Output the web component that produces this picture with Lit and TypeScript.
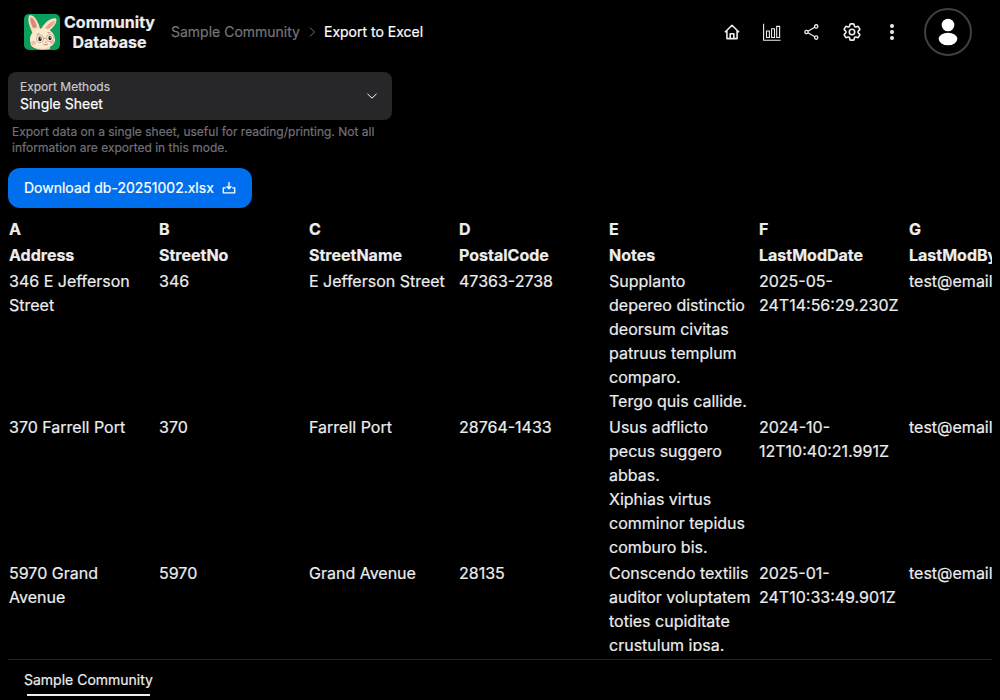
import { LitElement, html, css, svg } from "lit";
import { customElement } from "lit/decorators.js";

const columns = ["A", "B", "C", "D", "E", "F", "G"];
const headings = ["Address", "StreetNo", "StreetName", "PostalCode", "Notes", "LastModDate", "LastModBy"];
const rows = [
  ["346 E Jefferson Street", "346", "E Jefferson Street", "47363-2738",
    "Supplanto depereo distinctio deorsum civitas patruus templum comparo.\nTergo quis callide.",
    "2025-05-24T14:56:29.230Z", "test@email"],
  ["370 Farrell Port", "370", "Farrell Port", "28764-1433",
    "Usus adflicto pecus suggero abbas.\nXiphias virtus comminor tepidus comburo bis.",
    "2024-10-12T10:40:21.991Z", "test@email"],
  ["5970 Grand Avenue", "5970", "Grand Avenue", "28135",
    "Conscendo textilis auditor voluptatem toties cupiditate crustulum ipsa.",
    "2025-01-24T10:33:49.901Z", "test@email"],
];

const logo = svg`<svg class="logo" viewBox="0 0 36 36">
  <rect width="36" height="36" rx="5" fill="#0c9f5b"/>
  <path d="M8.500 19C5 12 3 4.500 5.500 1.300C10 0 15 8 16.500 17Z" fill="#f8dfc0"/>
  <path d="M9 14C6.500 9 5.500 5 6.800 3.300C9.500 3.500 12 8.500 13 13.500Z" fill="#d98a78"/>
  <path d="M16.500 17C18.500 10.500 25 4 32 4.300C34 8 29 15.500 21.500 18.500Z" fill="#f8dfc0"/>
  <path d="M21 14.500C23.500 10.500 27.500 7.300 30.800 7C31 9.500 27 13.500 22.500 16Z" fill="#e8a48e"/>
  <path d="M6.500 31L7 27.500L26 31L26 35C20 36.500 11 36.500 6.500 31Z" fill="#f2d5b5"/>
  <path d="M17 14.500C24.500 13.500 30.500 18.500 31 25.500C31.300 31 25 34.500 18 34.800C10 35 5.500 30.500 6 25C6.500 19 10.500 15.300 17 14.500Z" fill="#fce8cd"/>
  <circle cx="9.500" cy="29" r="2.300" fill="#f3bfa2"/>
  <circle cx="28" cy="28" r="2" fill="#efb195"/>
  <ellipse cx="16" cy="24.800" rx="3.500" ry="3.900" fill="#fff6e8" stroke="#a58470" stroke-width=".6"/>
  <ellipse cx="26" cy="23.900" rx="3.400" ry="3.700" fill="#fff6e8" stroke="#a58470" stroke-width=".6"/>
  <ellipse cx="16" cy="24.900" rx="1.700" ry="2.400" fill="#342621"/>
  <ellipse cx="26" cy="24" rx="1.600" ry="2.300" fill="#342621"/>
  <circle cx="16.500" cy="24" r=".6" fill="#fff"/><circle cx="26.400" cy="23.200" r=".6" fill="#fff"/>
  <path d="M12.500 20.700l3-1.500M23.500 18.500l3 .3M19.500 24.500l3-.3" stroke="#a87b66" stroke-width=".7" fill="none"/>
  <path d="M20.700 27.800h2.200l-1 1.200Z" fill="#c9675c"/>
  <path d="M19.500 30.300q2.500 1.500 4.500-.3" fill="none" stroke="#98594d" stroke-width=".7"/>
</svg>`;

const homeIcon = svg`<svg class="icon" viewBox="0 0 18 18">
  <path d="M1.900 9.200L9 2.300l7.100 6.900M3.900 7.600v8h10.200v-8M7.200 15.400v-4.700h3.600v4.700"/>
</svg>`;
const chartIcon = svg`<svg class="icon chart" viewBox="0 0 18 18">
  <path d="M.6.700v16.600h17M3.500 8h2.900v6.500H3.500zM8.600 5.800h2.900v8.700H8.600zM13.700 3.400h2.900v11.100h-2.900z"/>
</svg>`;
const shareIcon = svg`<svg class="icon share" viewBox="0 0 18 18">
  <path d="M4.900 8.200l6.900-3.900M4.900 9.800l6.900 3.900"/>
  <circle cx="3.500" cy="9" r="1.650"/><circle cx="13.200" cy="3.400" r="1.650"/><circle cx="13.200" cy="14.600" r="1.650"/>
</svg>`;
const gearIcon = svg`<svg class="icon gear" viewBox="2 2 20 20">
  <path d="M9.594 3.940c.09-.542.56-.94 1.110-.94h2.593c.55 0 1.020.398 1.110.94l.213 1.281c.063.374.313.686.645.87.074.04.147.083.22.127.325.196.72.257 1.075.124l1.217-.456a1.125 1.125 0 0 1 1.370.49l1.296 2.247a1.125 1.125 0 0 1-.26 1.431l-1.003.827c-.293.241-.438.613-.43.992a7.723 7.723 0 0 1 0 .255c-.008.378.137.75.43.991l1.004.827c.424.35.534.955.26 1.430l-1.298 2.247a1.125 1.125 0 0 1-1.369.491l-1.217-.456c-.355-.133-.75-.072-1.076.124a6.470 6.470 0 0 1-.22.128c-.331.183-.581.495-.644.869l-.213 1.281c-.09.543-.56.94-1.110.94h-2.594c-.55 0-1.019-.398-1.110-.94l-.213-1.281c-.062-.374-.312-.686-.644-.87a6.520 6.520 0 0 1-.22-.127c-.325-.196-.72-.257-1.076-.124l-1.217.456a1.125 1.125 0 0 1-1.369-.49l-1.297-2.247a1.125 1.125 0 0 1 .26-1.431l1.004-.827c.292-.24.437-.613.43-.991a6.932 6.932 0 0 1 0-.255c.007-.38-.138-.751-.43-.992l-1.004-.827a1.125 1.125 0 0 1-.26-1.430l1.297-2.247a1.125 1.125 0 0 1 1.370-.491l1.216.456c.356.133.751.072 1.076-.124.072-.044.146-.086.22-.128.332-.183.582-.495.644-.869l.214-1.280Z"/>
  <circle cx="12" cy="12" r="3"/>
</svg>`;
const moreIcon = svg`<svg class="icon solid" viewBox="0 0 18 18">
  <circle cx="9" cy="3" r="2"/><circle cx="9" cy="9" r="2"/><circle cx="9" cy="15" r="2"/>
</svg>`;
const personIcon = svg`<svg class="person" viewBox="0 0 20 28">
  <circle cx="10" cy="7" r="6.300"/><ellipse cx="10" cy="21" rx="9.300" ry="6.300"/>
</svg>`;
const breadcrumbChevron = svg`<svg class="separator" viewBox="0 0 14 14">
  <path d="M5 2.500l4.500 4.500L5 11.500"/>
</svg>`;
const selectChevron = svg`<svg class="chevron" viewBox="0 0 16 16">
  <path d="M3.500 5.800l4.500 4.400L12.500 5.800"/>
</svg>`;
const downloadIcon = svg`<svg class="download" viewBox="0 0 14 14">
  <path d="M3.800 6.900H1.300v4.900h11.400V6.900h-2.500M7 .9v6.600M4.600 5.300L7 7.700l2.400-2.400"/>
</svg>`;

@customElement("app-root")
export class AppRoot extends LitElement {
  static styles = css`
    :host { display: flex; flex-direction: column; box-sizing: border-box; width: 100%; height: 100vh; overflow: hidden; background: #000; color: #ecedee; font: 16px/24px Inter, sans-serif; -webkit-text-stroke: .2px currentColor; }
    * { box-sizing: border-box; }
    svg { display: block; flex: none; }
    .nav { display: flex; align-items: center; height: 64px; flex: none; padding: 0 28px 0 24px; }
    .logo { width: 36px; height: 36px; }
    .brand { width: 91px; margin-left: 4px; text-align: center; font-weight: 700; line-height: 20px; }
    .crumbs { display: flex; align-items: center; margin-left: 16px; font-size: 14px; line-height: 20px; white-space: nowrap; }
    .parent { color: #767677; }
    .current { color: #fff; }
    .separator { width: 14px; height: 14px; margin: 0 5px; fill: none; stroke: #767677; stroke-width: 1; }
    .actions { display: flex; align-items: center; gap: 22px; margin-left: auto; }
    .icon { width: 18px; height: 18px; fill: none; stroke: #ecedee; stroke-width: 1.6; stroke-linejoin: round; }
    .chart { stroke-width: 1.1; stroke-linejoin: miter; }
    .share { stroke-width: 1.3; }
    .gear { stroke-width: 1.8; }
    .solid { fill: #ecedee; stroke: none; }
    .avatar { display: grid; place-items: center; width: 48px; height: 48px; margin-left: 1px; border: 2px solid #3f3f46; border-radius: 50%; }
    .person { width: 20px; height: 28px; fill: #fff; }
    .controls { padding: 8px 8px 0; flex: none; }
    .select { display: flex; align-items: center; justify-content: space-between; width: 384px; height: 48px; padding: 0 12px; border-radius: 8px; background: #27272a; }
    .label { font-size: 12px; line-height: 16px; color: #c9c9cc; }
    .value { font-size: 14px; line-height: 18px; color: #fff; }
    .chevron { width: 16px; height: 16px; fill: none; stroke: #fff; stroke-width: 1; }
    .help { width: 384px; padding: 4px 4px 0; font-size: 12px; line-height: 16px; color: #717179; }
    .button { display: flex; align-items: center; gap: 8px; width: 244px; height: 40px; margin-top: 12px; padding: 0 16px; border: 0; border-radius: 12px; background: #006fee; color: #fff; font: 14px/20px Inter, sans-serif; white-space: nowrap; -webkit-text-stroke: .2px currentColor; }
    .download { width: 14px; height: 14px; fill: none; stroke: #fff; stroke-width: 1.3; stroke-linejoin: round; }
    .sheet { flex: 1; min-height: 0; margin: 8px 8px 0; overflow: auto; scrollbar-width: none; }
    .grid { table-layout: fixed; border-collapse: collapse; width: 1050px; }
    .cell { padding: 1px 7px 1px 1px; vertical-align: top; text-align: left; font-weight: 400; white-space: pre-line; }
    .bold { font-weight: 700; }
    .tabs { display: flex; flex: none; height: 41px; margin: 8px 8px 0; padding: 0 16px; border-top: 1px solid #242427; }
    .tab { display: flex; flex-direction: column; align-items: center; padding-top: 10px; font-size: 14px; line-height: 20px; white-space: nowrap; }
    .marker { width: 123px; height: 2px; margin-top: 4px; background: #ecedee; }
  `;

  render() {
    return html`
      <header class="nav">
        ${logo}
        <div class="brand">Community Database</div>
        <nav class="crumbs"><span class="parent">Sample Community</span>${breadcrumbChevron}<span class="current">Export to Excel</span></nav>
        <div class="actions">${homeIcon}${chartIcon}${shareIcon}${gearIcon}${moreIcon}<div class="avatar">${personIcon}</div></div>
      </header>
      <section class="controls">
        <div class="select">
          <div><div class="label">Export Methods</div><div class="value">Single Sheet</div></div>
          ${selectChevron}
        </div>
        <div class="help">Export data on a single sheet, useful for reading/printing. Not all information are exported in this mode.</div>
        <button class="button"><span>Download db-20251002.xlsx</span>${downloadIcon}</button>
      </section>
      <main class="sheet">
        <table class="grid">
          <thead>
            <tr>${columns.map((c) => html`<th class="cell bold">${c}</th>`)}</tr>
            <tr>${headings.map((h) => html`<th class="cell bold">${h}</th>`)}</tr>
          </thead>
          <tbody>${rows.map((r) => html`<tr>${r.map((v) => html`<td class="cell">${v}</td>`)}</tr>`)}</tbody>
        </table>
      </main>
      <footer class="tabs"><div class="tab">Sample Community<span class="marker"></span></div></footer>
    `;
  }
}
